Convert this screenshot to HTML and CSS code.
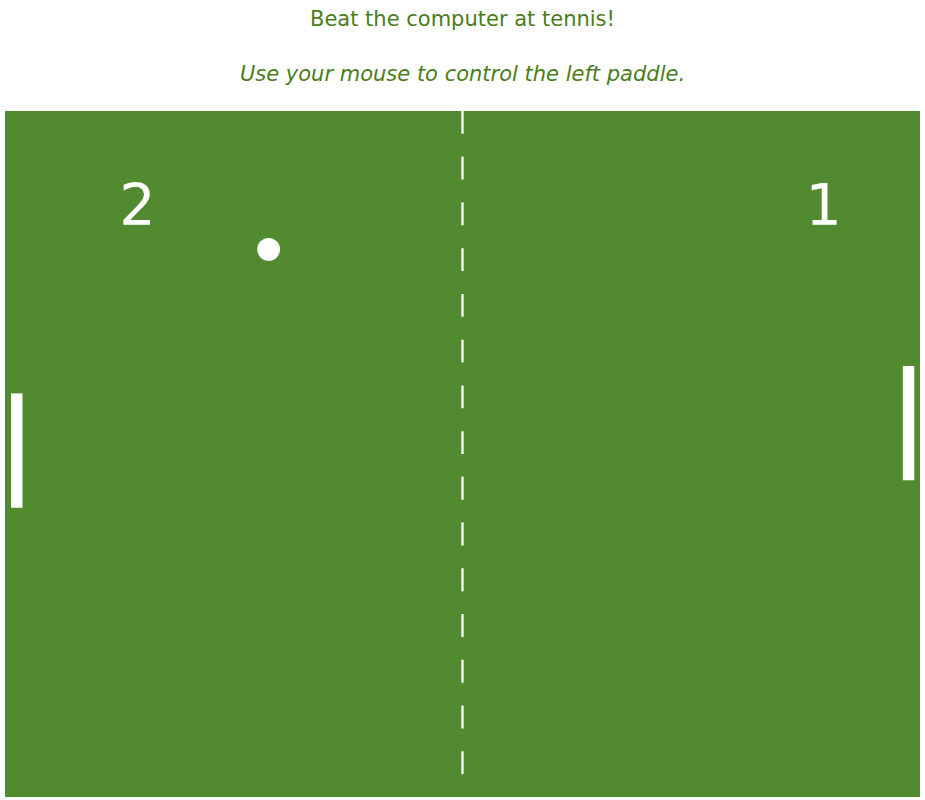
FILE: index.html
```html
<!DOCTYPE html>
<html lang="en">
<head>
<meta charset="utf-8">
<title>Tennis</title>
<link rel="stylesheet" href="styles.css">
</head>
<body>
<header class="intro">
  <p class="title">Beat the computer at tennis!</p>
  <p class="hint">Use your mouse to control the left paddle.</p>
</header>
<main class="court-wrap">
  <svg class="court" viewBox="0 0 800 600" preserveAspectRatio="none" xmlns="http://www.w3.org/2000/svg">
    <rect class="grass" x="0" y="0" width="800" height="600"/>
    <line class="net" x1="400" y1="0" x2="400" y2="600"/>
    <text class="score" x="100" y="100">2</text>
    <text class="score" x="700" y="100">1</text>
    <circle class="ball" cx="230.5" cy="121" r="10"/>
    <rect class="paddle" x="5.3" y="247" width="10" height="100"/>
    <rect class="paddle" x="785" y="223" width="10" height="100"/>
  </svg>
</main>
</body>
</html>
```
FILE: styles.css
```css
html, body {
  margin: 0;
  padding: 0;
  background: #ffffff;
}
body {
  padding: 0 5px;
}
.intro {
  padding-top: 4px;
  text-align: center;
  color: #4a7d1b;
  font-family: "DejaVu Sans", sans-serif;
  font-size: 21px;
  line-height: 30px;
}
.intro p {
  margin: 0;
}
.intro .hint {
  margin-top: 25px;
  font-style: italic;
}
.court-wrap {
  margin-top: 22px;
  display: block;
}
.court {
  display: block;
  width: 915px;
  height: 686px;
}
.grass {
  fill: #528a2f;
}
.net {
  stroke: #ffffff;
  stroke-width: 2;
  stroke-dasharray: 20 20;
}
.score {
  fill: #ffffff;
  font-family: "DejaVu Sans", Verdana, sans-serif;
  font-size: 50px;
}
.ball, .paddle {
  fill: #ffffff;
}
```
